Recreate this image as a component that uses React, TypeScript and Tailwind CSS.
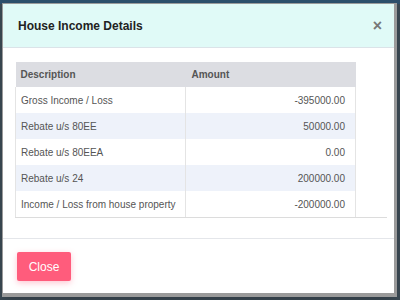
export default function App() {
  const rows = [
    ["Gross Income / Loss", "-395000.00"],
    ["Rebate u/s 80EE", "50000.00"],
    ["Rebate u/s 80EEA", "0.00"],
    ["Rebate u/s 24", "200000.00"],
    ["Income / Loss from house property", "-200000.00"],
  ];
  return (
    <div
      className="w-[400px] h-[300px] bg-[#3a4852] relative overflow-hidden"
      style={{ fontFamily: '"Liberation Sans", Arial, sans-serif' }}
    >
      <div className="h-[4px] bg-[#2c4f6b]" />
      <div className="absolute left-[2px] top-[3px] w-[395px] h-[294px] bg-[#9a9a9a] shadow-lg">
        <div className="ml-[1px] mt-[1px] w-[391px] h-[289px] bg-white flex flex-col">
          <div className="h-[44px] bg-[#e0faf7] border-b border-[#dbe3e8] flex items-center justify-between pl-[15px] pr-[12px]">
            <span className="text-[12px] font-bold text-[#222]">House Income Details</span>
            <span className="text-[16px] font-bold text-[#777] leading-none">×</span>
          </div>
          <div className="pt-[14px] pl-[12px] pr-[7px]">
            <div className="border-b border-[#dcdcdc]">
              <table className="w-[341px] border-collapse text-[10px] text-[#555] whitespace-nowrap">
                <thead>
                  <tr className="bg-[#dcdde2] h-[25px]">
                    <th className="text-left font-bold pl-[5px] w-[170px]">Description</th>
                    <th className="text-left font-bold pl-[6px]">Amount</th>
                  </tr>
                </thead>
                <tbody>
                  {rows.map(([d, a], i) => (
                    <tr key={d} className={`h-[26px] ${i % 2 === 1 ? "bg-[#eef2fa]" : "bg-white"}`}>
                      <td className="pl-[5px] border-l border-r border-[#e4e4e4]">{d}</td>
                      <td className="text-right pr-[10px] border-r border-[#e4e4e4]">{a}</td>
                    </tr>
                  ))}
                </tbody>
              </table>
            </div>
          </div>
          <div className="mt-[20px] border-t border-[#e4e6ea] pt-[13px] pl-[14px]">
            <button className="w-[54px] h-[29px] rounded-[2px] bg-[#ff5c7c] text-white text-[12px] shadow-[0_2px_6px_rgba(255,92,124,0.35)]">
              Close
            </button>
          </div>
        </div>
      </div>
    </div>
  );
}
